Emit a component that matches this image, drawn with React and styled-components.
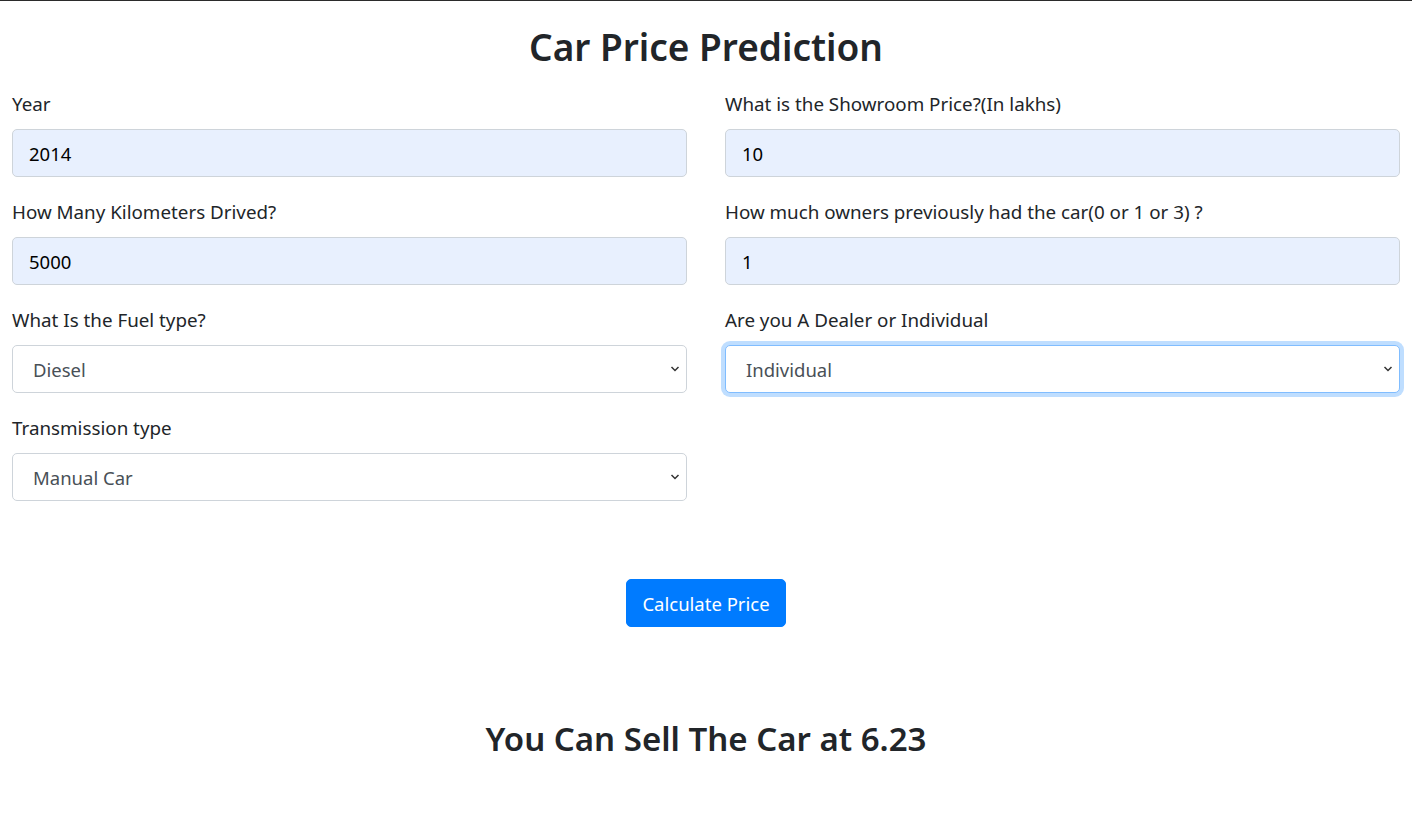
import React from 'react'
import styled, { createGlobalStyle } from 'styled-components'

const GlobalStyle = createGlobalStyle`
  * { box-sizing: border-box; }
  body {
    margin: 0;
    background: #fff;
    color: #212529;
    font-family: "Noto Sans", "Open Sans", sans-serif;
  }
`

const Page = styled.div`
  border-top: 1px solid #2b2b2b;
  min-height: 837px;
  padding: 0 12px;
`

const Title = styled.h2`
  margin: 22px 0 20px;
  text-align: center;
  font-size: 37px;
  font-weight: 600;
  line-height: 48px;
`

const Grid = styled.div`
  display: grid;
  grid-template-columns: 1fr 1fr;
  column-gap: 38px;
  row-gap: 22px;
`

const Field = styled.div`
  display: flex;
  flex-direction: column;
`

const Label = styled.label`
  font-size: 18.8px;
  line-height: 27px;
  margin-bottom: 11px;
  color: #212529;
`

const Input = styled.input`
  height: 48px;
  width: 100%;
  padding: 0 16px;
  font-family: inherit;
  font-size: 18.5px;
  color: #000;
  background: #e8f0fe;
  border: 1px solid #ced4da;
  border-radius: 5px;
  outline: none;
`

const SelectWrap = styled.div`
  position: relative;
`

const Select = styled.select`
  appearance: none;
  height: 48px;
  width: 100%;
  padding: 0 20px;
  font-family: inherit;
  font-size: 18.5px;
  color: #495057;
  background: #fff;
  border: 1px solid ${p => (p.$focused ? '#80bdff' : '#ced4da')};
  border-radius: 5px;
  box-shadow: ${p => (p.$focused ? '0 0 0 4px rgba(0,123,255,.25)' : 'none')};
  outline: none;
`

const Chevron = styled.svg`
  position: absolute;
  right: 6px;
  top: 50%;
  margin-top: -5px;
  width: 12px;
  height: 10px;
  pointer-events: none;
`

const Actions = styled.div`
  display: flex;
  justify-content: center;
  margin-top: 78px;
`

const Button = styled.button`
  height: 48px;
  padding: 0 15px;
  font-family: inherit;
  font-size: 18.5px;
  color: #fff;
  background: #007bff;
  border: 1px solid #007bff;
  border-radius: 5px;
`

const Result = styled.h3`
  margin: 92px 0 0;
  text-align: center;
  font-size: 33px;
  font-weight: 600;
  line-height: 40px;
`

const TextField = ({ label, value }) => (
  <Field>
    <Label>{label}</Label>
    <Input defaultValue={value} />
  </Field>
)

const SelectField = ({ label, options, focused }) => (
  <Field>
    <Label>{label}</Label>
    <SelectWrap>
      <Select $focused={focused} defaultValue={options[0]}>
        {options.map(o => <option key={o}>{o}</option>)}
      </Select>
      <Chevron viewBox="0 0 12 10">
        <path d="M2.5 3 L6 6.5 L9.5 3" fill="none" stroke="#333" strokeWidth="1.5" />
      </Chevron>
    </SelectWrap>
  </Field>
)

export default function App() {
  return (
    <>
      <GlobalStyle />
      <Page>
        <Title>Car Price Prediction</Title>
        <Grid>
          <TextField label="Year" value="2014" />
          <TextField label="What is the Showroom Price?(In lakhs)" value="10" />
          <TextField label="How Many Kilometers Drived?" value="5000" />
          <TextField label="How much owners previously had the car(0 or 1 or 3) ?" value="1" />
          <SelectField label="What Is the Fuel type?" options={['Diesel', 'Petrol', 'CNG']} />
          <SelectField label="Are you A Dealer or Individual" options={['Individual', 'Dealer']} focused />
          <SelectField label="Transmission type" options={['Manual Car', 'Automatic Car']} />
        </Grid>
        <Actions>
          <Button>Calculate Price</Button>
        </Actions>
        <Result>You Can Sell The Car at 6.23</Result>
      </Page>
    </>
  )
}
